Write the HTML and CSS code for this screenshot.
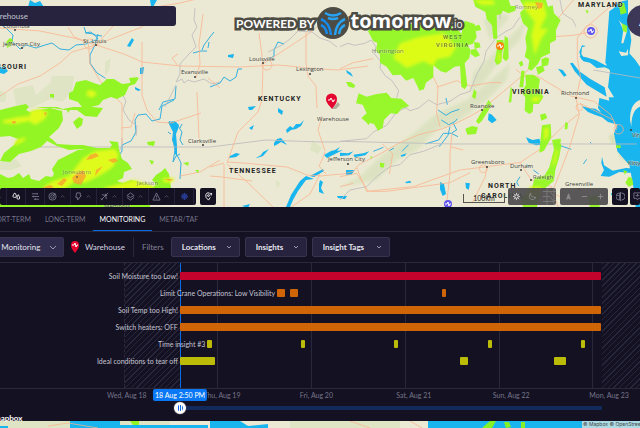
FILE: index.html
```html
<!DOCTYPE html>
<html lang="en">
<head>
    <meta charset="utf-8">
    <title>Monitoring - Warehouse</title>
    <link rel="stylesheet" href="styles.css">
</head>
<body>
<div class="app">
    <svg class="map" viewBox="0 0 640 428" preserveAspectRatio="xMidYMid slice" role="img" aria-label="Weather map">
        <defs>
            <filter id="soft"><feGaussianBlur stdDeviation="1.5"/></filter>
            <filter id="soft-east"><feGaussianBlur stdDeviation="5"/></filter>
            <filter id="edge"><feGaussianBlur stdDeviation="0.6"/></filter>
        </defs>
        <rect width="640" height="428" fill="#ebe9d3"/>

        <!-- forests -->
        <g fill="#dae4bf" opacity="0.7" filter="url(#edge)">
            <path d="M13 89l20-4 3 10 14-12 2-7 22 0-2 16-10 10-12-3-10 5-8 4-16-3z"/>
            <path d="M105 62l6-4-2 12-4 6zM0 90l7 4-2 8-5 0zM0 162l16-3 6 7-10 4-12 0z"/>
            <path d="M312 140l10 8-4 6-8-4zM608 136l8-4 4 8-8 4zM275 180l6 3-4 5z"/>
            <path d="M0 421h170v7H0zM290 421h110v7H290z"/>
        </g>

        <!-- west and centre water -->
        <g class="water">
            <path d="M30 0l5 3 5-2 4 6-5 2-5-3-6 1zM150 0h7l-4 7-2-1zM127 46l5-8 2 2-4 7zM140 68l4-1-1 7-3 0zM135 87l6 3-3 1-3-2zM0 68l4-2 4 5-4 3-4-1z"/>
            <path d="M228 55l6-1-1 4-5-1zM248 107l8-1-4 4-3 0zM278 108l5 3-1 4-4-3zM249 128l5-3-2 5zM286 130l4-4 3 2 3-4 4 0 4-4-3 6-5 3-5 1-4 3zM274 143l3-4 4-1 6 7-6-3-3 2-4 2zM256 158l5-3 2-3 6-3-6 7-6 2zM230 156l6-3 4 1-4 3-7 1zM324 155l7-4 4-1 5-3-3 4 6-1-8 4-8 4zM346 70l5 3 2 4-6-4zM242 206l8-2-2 4z"/>
            <path d="M286 207l5-12 9-14 6-5 8 3-8 1-8 11-5 9-3 7zM320 180l3 2-2 6 3 6-5-2 0-8zM310 176l13-7 1 2-10 6zM337 196l10 0-2 3-7-1z"/>
            <path d="M168 122l7-1 4 4-1 4-2 5 1 12 0 10-2-2-1-9-2-5 1-8-3-6z"/>
            <path d="M70 421h50v7H70zM120 425h88v3h-88zM0 426h8v2H0zM210 421h30l8 5 20-2v4h-58zM428 421h212v7H428z"/>
        </g>
        <g class="river">
            <path d="M175 130l-2 10 2 10-2 12 3-6 4-2M178 126l4 6-2 8 3 5M177 155l4 8-1 16M172 124l-3-3M171 134l-3-2M180 128l2-4"/>
            <path d="M0 24l6 4 7 7-1 6 8 8 6-4 10 3 9-3 7-2 8 6 9 1 7-5 10-1 12-5-4-5-8-1-2-6M85 33l6-1 3 3 8 1"/>
            <path d="M98 34l-3 11-5 10 0 8 7 10 8 5M176 86l-1 13-12 3-4 8M214 32l-4 5-6 8-2 5M193 53l8-2 6 0M208 48l1-6"/>
            <path d="M174 100l-12 6-2 13-8 2-6-7-8 1-3 5 1 12-5 9-9 4 0 6-4 6"/>
            <path d="M210 87l10-4 4-6 6 4 6-4 2-8 4 0M268 60l6-4 0-6 4-8 6 2"/>
        </g>

        <!-- state borders and highways, west and centre -->
        <g class="border">
            <path d="M195 8l-1 12 3 7-5 8 4 12-8 8-8 9 0 10-4 8 6-3 2 4 4-3 6 2 10-3 8 5 8-2M176 85l-8 16-3 6M105 78l4 3 10 8 3 5 4 7-3 9 6 10 8 6-1 10M122 138l0 8-5 8-3 14-8 16"/>
            <path d="M40 147h82M122 147h88l56 -7 54 2h20"/>
            <path d="M268 52l14-7 8-6 8-8 14 1 8 6 9 3 8 6"/>
        </g>
        <g class="road">
            <path d="M0 28l40 3 34 7 22 7 28 9 18 8 38 4 60 1 38-2 42 4 18 1 30-4"/>
            <path d="M0 96l18-12 22-8 20-13 12-11 24-7 18-20M96 45l20-8 26-10 14-20 24-4 34-8M142 42v53l5 15 10 12 14 1 30-10M88 42l-14-5-6-10M88 40l2 24 12 20 20 20v40M178 66l-6-8 6-4"/>
            <path d="M197 92l2 46M196 78l4-14-1-20 4-30M208 78l12 10M121 128l10-1 4-14M180 176l20-4 20-12M263 63l-4-30M263 64l-1 36-4 12-20 20-11 31M263 64l44-29 22-18M306 32l0 30 2 14 8 10 1 22M322 116l-4 14 7 21M227 162l16 1 44 4 20 8 14 1 19-2M210 167l14-4M224 164l0 43M227 164l20 18 26 25M210 176l12 1 30 4M320 174l-10 20-20 14M325 152l-3 8-3 6 7 8"/>
            <circle cx="267" cy="65" r="5"/><circle cx="89" cy="44" r="5"/>
            <path d="M0 186l60-2M48 426l20-3 30 5M350 421l20 7M410 421l12 7"/>
        </g>

        <!-- east side is drawn at triple scale -->
        <g class="east" transform="translate(340) scale(0.333333)">
            <g fill="#d3dfb6" opacity="0.6" filter="url(#soft-east)">
                <path d="M0 560l60-30 60-60 100-70 70-60 90-40 60-50 70-60-10 50-60 60-80 60-70 30-60 60-60 30-60 60z"/>
                <path d="M400 220l60-60 60-60 40-40-20 60-60 60-50 70-40 30zM430 60l60-20 20 10-60 70z"/>
                <path d="M810 405l20 0 4 20-22 10zM840 440l36 20-10 30-30-20z"/>
            </g>
            <g class="water">
                <path d="M808 34l14-10 12-18 30-6 0 60 10 60-6 40 18 20 14 20v430h-12l-8-70-12-66-10-10-26-30-10-54 14-36-40-6-22-34 4-30 30 8-2-10 16 0-18-30 6-50-14-24z"/>
                <path d="M800 290l-60-36-36-40-14-24 8-2 20 26 32 22 44 26zM834 220l-40-18-24 2-20-16-20-4-12-16 20 4 28 8 30 16 40 4z"/>
                <path d="M738 138l-12 4-2 20 8 12 14 4-6 6-16-6-6-22 8-20zM724 318l22 6 20 2 20 14 24 14 30 6 20 20-26-6-30-8-18-14-22-8-20-8zM654 206l14 4 12 16-8 4zM446 340l10 4 14 16-14 10-12-10zM558 412l20 8 20-4 6 18-16 2-22-8zM300 546l12 6 6 30-10 6-8-20zM376 548l14 2-4 20-8-6z"/>
                <path d="M786 470l6 26 26 16 40-8 30 2v12l-20 0-30-2-30 14-26-2 10-18-8-20z"/>
                <path d="M0 458l24 2 16-6-12 12-28 2zM40 464l30-4 18-6-12 12-32 6zM18 510l26 0-10 14-16 0zM196 546l14-4 4 6-16 2zM182 466l18-6-6 8-10 2zM812 580l24 0-4 12-16-4zM0 588l18 4-4 6-14-6z"/>
            </g>
            <g class="river">
                <path d="M318 294l4 20M294 330l24 16 16-10 24-8M304 360l22 14 20-10 6-8M256 432l40-12 14-20 24 0 20 10M330 380l-6 26-26 34M340 370l10 20-14 8M640 430l30 10 24 8M570 500l-10-6M580 510l16 12M540 530l-10 16 6 12M740 478l-10 14M750 426l4 4M148 452l14-8M206 434l-20 20M100 454l30-12"/>
            </g>
            <g fill="#ebe9d3">
                <path d="M900 300q-30 10-30 60l4 20q0-50 26-60z"/>
                <path d="M836 60l14 30-6 40 6 0 12-40zM836 154l22 4 6-12 0 20-20 2z"/>
            </g>
            <g class="border">
                <path d="M0 140l24-10 20 6 30-6 20-10 14 20-6 20 20 24-2 20 16 24 20 14 20 30-6 20 10 20 30 20 26-8 30-24 24 14 40-10 30-20 30-10 20-50 22-40 6-30 30-40 30-20 20-10 20-30 40-30M480 0v56"/>
                <path d="M0 424l340 8h550M0 600l30-30 50-10 30-30 40-30 30-6 30-30 40-10 50-20M0 424l80-8 20-20 40-20 30-40 30-14M660 0l8 40 30 20 10 20M760 210l140 24"/>
            </g>
            <g class="road">
                <path d="M0 206l40-18 60-12M0 524l40-10 16-20 60-30 60-34 60-26 66-16 50-20 40-20 34-20 60-50 60-50 30-30 60-80"/>
                <path d="M300 380l-10-40 4-80-20-40M290 262l60-20 40 16 60-10 34 0M528 208l24 20 40 0 50 30 50 30 70 16 50 40 20 40M708 294l14-60-10-60 0-60 24-30 70-60 40-20M708 294l10 50-30 100-46 120M718 340l-50 40-60 60M640 110l60-4 50-10M700 0l-50 60-20 40M336 400l-6 60 0 60-10 90M330 440l40 10M440 500l-4 30-40 80M440 500l60-8 40-4 34 52 60 20 20 60M440 500l-80 10-140 50-140 14-30-70M0 530l50-10 36 56M80 574l60 0 190-26 60-30M128 432l30 30-10 60M0 560l40-10M540 488l60-40M600 560l60 30M830 390l-10-30-100-50"/>
                <circle cx="752" cy="94" r="20"/><circle cx="836" cy="388" r="14"/><circle cx="430" cy="506" r="12"/><circle cx="718" cy="322" r="10"/>
            </g>
            <g fill="#92f91c" opacity="0.92">
                <path d="M84 94l16 30 12 4-4 24 12 12 0 24 20 12 18 26 24-2 16 18 22-8 12 24 6 14 14-4 6-20 22-16 0-36 22 18 16 4 26-18 16-2 4 62 10 8 8-12-8-66 14-16 4-24-10-14 16-4 12-20-6-40-30-10-10 40-24-30H100z"/>
                <path d="M392 150l16-4 12 20-14 6-14-10zM402 126l16 2 4 14-18 4zM404 78l14-4 6 16-18 4z"/>
                <path d="M18 246l14 0 14 10-4 8-16-4zM56 280l24 10 30-8 30-4 14 16 30 2 24 22-24 8-12 16-20-2-20 20-4 24-14 8-12-20-24-6-14-12 16-14-12-26-20-4zM84 340l10 16-8 20-8-10z"/>
                <path d="M400 0h106l6 18 16 0-2 14-20 8-18-8-4 10-14 4 2 70-12 0-4-40-16-18-4-22-30-16z"/>
                <path d="M540 0h78l6 20 14-4 4 24 20 20-14 30 0 30-18 10 0 30-26 12-10 20-20 20-10-6 4-26-14-10 6-26-4-30 8-30-16-16-8-30 14-14z"/>
                <path d="M470 120l20 0 2 16-6 20-2 30-12 10-8-12 6-30zM494 108l10 6 2 60-8 10-10-10 4-30zM536 188l10-6 4 12-8 6zM544 212l10 0-4 50-12 0zM512 260l6 6-4 40-8 2zM604 178l14-6 10 4-4 20-18 4zM588 202l20-6 6 16-20 12z"/>
                <path d="M556 224l24 0 20 14-4 24 14 30-14 20-16 0-2 24-10 6-14-10 2-40-12-14 14-24zM600 344l16-4 6 14-18 8zM676 366l8 4-2 18-8 0zM606 376l26-4 2 40-22 40-14 6 4-44z"/>
                <path d="M636 420l20-4 8 20-6 34-12 40-4 32-26 22h-40l8-30 30-8 14-24 14-54zM660 414l4 10-16 10z"/>
                <path d="M402 268l8 8-4 22-10-8zM446 300l10 14-30 48-10 10-8-8 20-34zM376 386l20-8 18 4-6 20-26 2zM120 488l14 2-4 14-10-4zM828 436h14v8h-14zM866 530l10 4 4 20-14 6-10-12zM850 510l12 4-8 10zM736 30l10 2-4 10zM836 12l16-4 8 30-18 6zM846 70l16 8-2 20-12-6zM540 590l60-14-10 48h-40zM744 590l30-4 6 38h-30zM92 468l6 4-6 4z"/>
            </g>
            <g fill="#dcfc18" filter="url(#soft-east)">
                <path d="M180 130l60-20 70-10 40 40-20 30-40 8-10 20-30-14-50 20-40-30zM550 6l60 0 10 40-20 40 24 0-20 30-20 50-10-60 10-40-30-40zM580 290l26 0-16 16-18-4zM612 384l14 0-2 26-12 14zM648 450l6 0-8 40-10 10zM570 560h36l-10 30-40-4zM400 0l60 0 4 14-40 0zM474 160l8 0-2 24-6 0z"/>
            </g>
        </g>

        <!-- precipitation, west -->
        <g fill="#8cf719" opacity="0.92" filter="url(#edge)">
            <path d="M76 82l10-2 5 2 9 3 7-6 7 0 8 5 8-1 1-4 8-1-4 6-6 2-4 9-8 4-6-2-8 3-4 5-8 2-9 0-4-5-9-3 0-6 4-2z"/>
            <path d="M35 108l8-1 14 0 6 2 10-2 20 0 10 1-6 9-12-1-8-6-12 0-12-2-10 0zM50 94l4 0 0 4-4-1zM6 42l4-4 3 2-2 6-4 2zM67 110l3 0-2 3z"/>
            <path d="M0 110l16-4 10-2 3 3-3 3 4 2 8-2 12-2 12 3 1 9-4 8-10 9 4 3 4 4 16 1 10 0 14 3-2 4-14-3-12 1-12-4-6-3-4-2-6 6-10 4-12 3-9 8-10-1 4-8 10-8 4-6-8-3-12 1z"/>
            <path d="M73 122l6-5 4 2-1 6-5 4zM129 78l9-1-2 3-6 1z"/>
            <path d="M0 174l8 4 5-1 6-4 4 5 6-4 2 5 8 2 7-5 6 1 2-3-2-5 6-9 12-6 8-4 20-2 12 0 2-3-3-4 9 1 1 8 3 9 6 4 4 6-8 3-1 6-6 3 6 2 8-3 16 4 6 3 3-3-4-4 4-5 6-4 3-3 4 6 2 14-4 8-10 4-8 0-4 19H0z"/>
            <path d="M147 142l8-1-1 5-6-1zM149 160l5 1-2 4zM183 163l6-1-1 4zM195 170l4 0-1 3z"/>
            <path d="M130 421h9v4h-6zM482 428l8-7h6l-4 7zM504 422l5 0 2 5-5 1zM521 422h4v6h-4z"/>
            <path d="M0 205h150v3H0z"/>
        </g>
        <g fill="#dffb1a" filter="url(#soft)">
            <path d="M88 90l6 1 3 3-5 4-6-3zM4 120l14-3 12-1 0-5 10-2 8 3-3 7-10 6-6-4-14 3-13-1zM83 158l12-7 20-2 4 6-6 12-12 8-16 8-10-2-10 8-16 2-6-4 10-6 16-5zM104 188l30-8 20 6-4 14h-44zM163 178l12 0-4 5-8-1zM16 140l10-3-2 4-10 5z"/>
        </g>
        <g fill="#fb9d31" opacity="0.75" filter="url(#edge)">
            <path d="M90 155l6-2 3 3-7 3-6 1zM72 178l4-4 7-4 3 6-5 9-7-2zM57 184l7-6 3 2-5 6zM42 188l8-3 4 2-7 3zM108 160l7-2 3 3-5 2zM12 121l4 0-1 3-3-1zM44 112l3 1-2 3zM164 179h9l-3 2zM96 170l7-4-8 10zM535 2l8 1-1 5-4 1z"/>
        </g>

        <!-- places -->
        <g class="city">
            <text x="83" y="43">St. Louis</text><circle cx="96" cy="45" r="1"/>
            <text x="3" y="46">Jefferson City</text><circle cx="22" cy="48" r="1"/>
            <text x="3" y="28">Columbia</text><circle cx="15" cy="30" r="1"/>
            <text x="181" y="74">Evansville</text><circle cx="195" cy="77" r="1"/>
            <text x="249" y="61">Louisville</text><circle cx="263" cy="63" r="1"/>
            <text x="296" y="71">Lexington</text><circle cx="310" cy="74" r="1"/>
            <text x="372" y="53" opacity="0.6">Huntington</text>
            <text x="317" y="121">Warehouse</text>
            <text x="188" y="143">Clarksville</text><circle cx="203" cy="145" r="1"/>
            <text x="328" y="161">Jefferson City</text><circle cx="348" cy="164" r="1"/>
            <text x="63" y="174" opacity="0.5">Jonesboro</text><circle cx="77" cy="177" r="1" opacity="0.6"/>
            <text x="137" y="185" opacity="0.6">Jackson</text>
            <text x="104" y="208">Memphis</text>
            <text x="515" y="9" opacity="0.5">Romney</text>
            <text x="470" y="108">Roanoke</text><circle cx="482" cy="110" r="1"/>
            <text x="561" y="95">Richmond</text><circle cx="576" cy="98" r="1"/>
            <text x="471" y="164">Greensboro</text><circle cx="487" cy="167" r="1"/>
            <text x="510" y="168">Durham</text><circle cx="521" cy="170" r="1"/>
            <text x="533" y="179" opacity="0.8">Raleigh</text><circle cx="531" cy="180" r="1"/>
            <text x="565" y="186">Greenville</text><circle cx="579" cy="189" r="1"/>
            <text x="628" y="165">Kitty Hawk</text>
            <text x="632" y="137">Virginia Beach</text><circle cx="631" cy="130" r="1"/>
        </g>
        <g class="state">
            <text x="27" y="69" text-anchor="end">MISSOURI</text>
            <text x="258" y="101">KENTUCKY</text>
            <text x="229" y="173">TENNESSEE</text>
            <text x="578" y="7">MARYLAND</text>
            <text x="512" y="94">VIRGINIA</text>
            <text x="443" y="39" class="faded">WEST</text>
            <text x="436" y="47" class="faded">VIRGINIA</text>
            <text x="488" y="188">NORTH</text>
            <text x="481" y="198">CAROLINA</text>
        </g>

        <!-- alert pins -->
        <path d="M332 109l6-7 2 3-4 4z" fill="#8b8b7b" opacity="0.6"/>
        <path d="M332 109c-3-4-6-6-6-10a5.500 5.500 0 0 1 11 0c0 4-2 6-5 10z" fill="#e5062f"/>
        <path d="M328 100h2l1-2 2 4 1-2h1" class="pulse"/>
        <circle cx="500" cy="46" r="4" fill="#fc8210"/><path d="M497 46h2l1-2 1 4 1-2h1" class="pulse"/>
        <circle cx="591" cy="31" r="4" fill="#6256ee"/><path d="M588 31h2l1-2 1 4 1-2h1" class="pulse"/>
        <circle cx="448" cy="204" r="4" fill="#6256ee"/><path d="M445 204h2l1-2 1 4 1-2h1" class="pulse"/>
    </svg>

    <header class="top">
        <input class="search" type="text" value="Warehouse" aria-label="Search location">
        <div class="brand">
            <span class="brand-by">POWERED BY</span>
            <svg class="brand-logo" viewBox="0 0 32 32" aria-hidden="true">
                <circle cx="16" cy="16" r="16" fill="#4c4c45"/>
                <g fill="none" stroke="#28a3f4" stroke-width="2.500">
                    <path d="M8 6q8 5 16 0"/>
                    <path d="M11 11q5 2 10 0"/>
                    <path d="M4 12q9 4 10 16" stroke="#1689ec"/>
                    <path d="M4 18q5 2 6 9" stroke="#1689ec"/>
                    <path d="M28 12q-9 4-10 16"/>
                    <path d="M28 18q-5 2-6 9"/>
                </g>
            </svg>
            <span class="brand-name">tomorrow<small>.io</small></span>
        </div>
        <button class="avatar" type="button" aria-label="Account">A</button>
    </header>

    <div class="tools">
        <div class="toolbar layers">
            <button type="button" aria-label="More"><svg viewBox="0 0 10 10"><path d="M3 6l2-2 2 2"/></svg></button>
            <button type="button" class="on" aria-label="Precipitation"><svg viewBox="0 0 10 10"><path d="M3 1q-4 5 0 5t0-5zM7 3q-3 5 0 5t0-5z"/></svg></button>
            <button type="button" aria-label="Wind"><svg viewBox="0 0 10 10"><path d="M1 2h6M1 5h8M3 8h6M7 1v2M3 4v2M5 7v2"/></svg></button>
            <button type="button" class="wide" aria-label="Radar"><svg viewBox="0 0 10 10"><circle cx="5" cy="5" r="4"/><circle cx="5" cy="5" r="2"/><path d="M5 5l3-3"/></svg><svg class="up" viewBox="0 0 10 10"><path d="M3 6l2-2 2 2"/></svg></button>
            <button type="button" class="wide" aria-label="Lightning"><svg viewBox="0 0 10 10"><path d="M3 1h4v3h1L4 9V6H2z"/></svg><svg class="up" viewBox="0 0 10 10"><path d="M3 6l2-2 2 2"/></svg></button>
            <button type="button" class="wide" aria-label="Aviation"><svg viewBox="0 0 10 10"><path d="M1 9l8-8M2 3l6 1M6 2l1 6M1 7l2 2"/></svg><svg class="up" viewBox="0 0 10 10"><path d="M3 6l2-2 2 2"/></svg></button>
            <button type="button" class="wide" aria-label="Layers"><svg viewBox="0 0 10 10"><path d="M1 4l4-3 4 3-4 2zM1 6l4 3 4-3"/></svg><svg class="up" viewBox="0 0 10 10"><path d="M3 6l2-2 2 2"/></svg></button>
            <button type="button" class="wide" aria-label="Alerts"><svg viewBox="0 0 10 10"><path d="M5 1l4 8H1zM5 4v2M5 7v1"/></svg><svg class="up" viewBox="0 0 10 10"><path d="M3 6l2-2 2 2"/></svg></button>
            <button type="button" class="snow" aria-label="Winter"><svg viewBox="0 0 10 10"><path d="M5 1v8M1 5h8M2 2l6 6M8 2L2 8"/><circle cx="5" cy="5" r="3"/></svg></button>
        </div>
        <div class="toolbar">
            <button type="button" class="on" aria-label="Add location"><svg viewBox="0 0 10 10"><path d="M7 6L5 9Q1 6 2 3t4-2"/><circle cx="5" cy="4" r="1"/><path d="M8 1v3M6 2h3"/></svg></button>
        </div>
        <div class="scale">100km</div>
        <div class="toolbar grey">
            <button type="button" class="on" aria-label="Light map"><svg viewBox="0 0 10 10"><circle cx="5" cy="5" r="2"/><path d="M5 1v1M5 8v1M1 5h1M8 5h1M2 2l1 1M7 7l1 1M8 2L7 3M3 7L2 8"/></svg></button>
            <button type="button" aria-label="Dark map"><svg viewBox="0 0 10 10"><path d="M3 1q-1 5 6 5-3 4-6 2T3 1z"/></svg></button>
            <button type="button" aria-label="Satellite map"><svg class="sat" viewBox="0 0 16 16"><path d="M0 3h16M0 8h7l3 4h6M4 0v16M11 0v16M0 13h11M7 3l4 5"/></svg></button>
        </div>
        <div class="toolbar grey">
            <button type="button" aria-label="North"><svg viewBox="0 0 10 10"><path class="solid" d="M5 2l2 6-2-1-2 1z"/></svg></button>
            <button type="button" aria-label="Zoom out"><svg viewBox="0 0 10 10"><path d="M2 5h6"/></svg></button>
            <button type="button" aria-label="Zoom in"><svg viewBox="0 0 10 10"><path d="M2 5h6M5 2v6"/></svg></button>
        </div>
        <div class="toolbar">
            <button type="button" aria-label="Globe"><svg viewBox="0 0 10 10"><path d="M4 1a4 4 0 0 0 0 8zM6 1a4 4 0 0 1 0 8M5 0v10M1 4h3"/></svg></button>
        </div>
        <div class="toolbar last">
            <button type="button" aria-label="Chat"><svg viewBox="0 0 10 10"><path d="M1 1h8v6H6L5 9 4 7H1zM5 2v3M3 4h4"/></svg></button>
        </div>
    </div>

    <main class="panel">
        <nav class="tabs">
            <a href="#short">SHORT-TERM</a>
            <a href="#long">LONG-TERM</a>
            <a href="#monitoring" class="active">MONITORING</a>
            <a href="#metar">METAR/TAF</a>
        </nav>

        <div class="filters">
            <label class="picker picker-main">
                <select aria-label="Monitoring"><option>All Monitoring</option></select>
                <svg viewBox="0 0 8 8"><path d="M1 3l3 3 3-3"/></svg>
            </label>
            <svg class="pin" viewBox="0 0 10 14" aria-hidden="true"><path d="M5 13C2 9 1 8 1 5a4 4 0 0 1 8 0c0 3-1 4-4 8z" fill="#e5062f"/><path class="pulse" d="M2 5h2l1-2 1 4 1-2h1"/></svg>
            <span class="place">Warehouse</span>
            <span class="filters-title">Filters</span>
            <label class="picker">
                <select aria-label="Locations"><option>Locations</option></select>
                <svg viewBox="0 0 8 8"><path d="M2 3l2 2 2-2"/></svg>
            </label>
            <label class="picker picker-insights">
                <select aria-label="Insights"><option>Insights</option></select>
                <svg viewBox="0 0 8 8"><path d="M2 3l2 2 2-2"/></svg>
            </label>
            <label class="picker picker-tags">
                <select aria-label="Insight Tags"><option>Insight Tags</option></select>
                <svg viewBox="0 0 8 8"><path d="M2 3l2 2 2-2"/></svg>
            </label>
        </div>

        <div class="chart">
            <div class="days">
                <span class="day-none"></span>
                <span class="day-past"></span>
                <span class="day-start"></span>
                <span class="day"></span>
                <span class="day"></span>
                <span class="day"></span>
                <span class="day"></span>
                <span class="day-end"></span>
                <span class="day-after"></span>
            </div>
            <div class="rows">
                <div class="row"><span class="row-label" style="width: 28.1%">Soil Moisture too Low!</span><i class="bar red" style="width: 65.8%"></i></div>
                <div class="row"><span class="row-label" style="width: 43.3%">Limit Crane Operations: Low Visibility</span><i class="bar orange" style="width: 1.25%"></i><i class="bar orange" style="margin-left: 0.75%; width: 1.25%"></i><i class="bar orange" style="margin-left: 22.5%; width: 0.7%"></i></div>
                <div class="row"><span class="row-label" style="width: 28.1%">Soil Temp too High!</span><i class="bar orange" style="width: 65.8%"></i></div>
                <div class="row"><span class="row-label" style="width: 28.1%">Switch heaters: OFF</span><i class="bar orange" style="width: 65.8%"></i></div>
                <div class="row"><span class="row-label" style="width: 32.4%">Time insight #3</span><i class="bar lime" style="width: 0.65%"></i><i class="bar lime" style="margin-left: 13.95%; width: 0.65%"></i><i class="bar lime" style="margin-left: 13.95%; width: 0.65%"></i><i class="bar lime" style="margin-left: 13.95%; width: 0.65%"></i><i class="bar lime" style="margin-left: 13.95%; width: 0.65%"></i></div>
                <div class="row"><span class="row-label" style="width: 28.1%">Ideal conditions to tear off</span><i class="bar lime" style="width: 5.5%"></i><i class="bar lime" style="margin-left: 38.3%; width: 1.3%"></i><i class="bar lime" style="margin-left: 13.4%; width: 1.9%"></i></div>
            </div>
        </div>

        <div class="axis">
            <span>Wed, Aug 18</span>
            <span>Thu, Aug 19</span>
            <span>Fri, Aug 20</span>
            <span>Sat, Aug 21</span>
            <span>Sun, Aug 22</span>
            <span>Mon, Aug 23</span>
        </div>

        <div class="slider">
            <output class="now" for="time">18 Aug 2:50 PM</output>
            <input id="time" type="range" min="0" max="108" value="0" aria-label="Time">
        </div>
        <span class="mapbox">mapbox</span>
    </main>

    <footer class="credits">
        <a href="#mapbox">© Mapbox</a> <a href="#osm">© OpenStreetMap</a>
    </footer>
</div>
</body>
</html>
```
FILE: styles.css
```css
body {
    margin: 0;
    font-family: Lato, "Open Sans", sans-serif;
    font-size: 8px;
    color: #d8d6e4;
    background-color: #131122;
}
button, input, select {
    font-family: inherit;
    font-size: inherit;
    color: inherit;
}
svg {
    display: block;
}
.app {
    position: relative;
    display: flex;
    flex-direction: column;
    min-height: 100vh;
    overflow: hidden;
}

/* map behind everything */
.map {
    position: absolute;
    width: 100%;
    height: 100%;
}
.water {
    fill: #19b5ee;
}
.river {
    fill: none;
    stroke: #35b0df;
    stroke-width: 1;
}
.border {
    fill: none;
    stroke: #bbb9bd;
    stroke-width: 1;
    opacity: 0.8;
}
.road {
    fill: none;
    stroke: #fbb18c;
    stroke-width: 1;
    opacity: 0.75;
}
.east .river, .east .border, .east .road {
    stroke-width: 3;
}
.city {
    font-family: "Open Sans", sans-serif;
    font-size: 6px;
    fill: #3c3c3a;
}
.state {
    font-family: Roboto, sans-serif;
    font-size: 7px;
    font-weight: bold;
    letter-spacing: 1px;
    fill: #222;
}
.state .faded {
    font-size: 6px;
    opacity: 0.5;
}
.city text, .state text {
    paint-order: stroke;
    stroke: rgba(240, 238, 220, 0.5);
    stroke-width: 1px;
}
.pulse {
    fill: none;
    stroke: #fff;
    stroke-width: 1;
}

/* header */
.top {
    position: relative;
    display: flex;
    align-items: flex-start;
    padding-top: 5px;
}
.search {
    box-sizing: border-box;
    width: 188px;
    height: 20px;
    margin: 1px 0 0 -12px;
    padding: 0;
    border: none;
    border-radius: 3px;
    background-color: #27233f;
    color: #c6c4d2;
}
.brand {
    display: flex;
    align-items: center;
    margin-left: 60px;
    color: #fff;
}
.brand-by, .brand-name {
    -webkit-text-stroke: 5px #4c4c45;
    paint-order: stroke;
    stroke-linejoin: round;
}
.brand-by {
    padding-top: 2px;
    font-size: 12px;
    font-weight: bold;
}
.brand-logo {
    width: 32px;
    height: 32px;
    margin: 0 2px;
}
.brand-name {
    font-family: "Open Sans", sans-serif;
    font-size: 20px;
    line-height: 32px;
    font-weight: bold;
}
.brand-name small {
    font-size: 10px;
    font-weight: normal;
}
.avatar {
    width: 32px;
    height: 32px;
    margin: 0 -19px 0 auto;
    border: none;
    border-radius: 50%;
    background-color: #3d3858;
    color: #fff;
    font-size: 12px;
}

/* map toolbars */
.tools {
    position: relative;
    display: flex;
    align-items: flex-end;
    gap: 4px;
    margin-top: auto;
    padding-bottom: 2px;
}
.toolbar {
    display: flex;
    flex: none;
    border-radius: 2px;
    background-color: #131122;
    overflow: hidden;
}
.toolbar button {
    display: flex;
    justify-content: space-around;
    align-items: center;
    width: 16px;
    height: 17px;
    padding: 0 3px;
    border: none;
    background: none;
    color: #77758a;
}
.toolbar svg {
    width: 9px;
    height: 9px;
    flex: none;
    fill: none;
    stroke: currentColor;
    stroke-width: 1;
}
.toolbar .up {
    opacity: 0.6;
}
.toolbar .sat {
    width: 16px;
    height: 17px;
    opacity: 0.6;
}
.toolbar .solid {
    fill: currentColor;
}
.toolbar .on {
    color: #fff;
}
.toolbar .snow {
    color: #2b3f9c;
}
.layers {
    width: 196px;
}
.layers button {
    width: 19px;
    border-right: 1px solid #25223a;
}
.layers button:first-child {
    width: 7px;
    justify-content: flex-end;
}
.layers button.wide {
    width: 26px;
}
.grey {
    background-color: rgba(76, 74, 77, 0.92);
}
.grey button {
    color: #8d8c8d;
}
.scale {
    box-sizing: border-box;
    width: 42px;
    height: 9px;
    margin: 0 -1px 2px auto;
    border: 1px solid #55554e;
    border-top: none;
    color: #222;
    font-size: 7px;
    line-height: 8px;
    text-align: center;
}
.last {
    width: 10px;
    margin-left: -2px;
}

/* bottom panel */
.panel {
    position: relative;
    margin-bottom: 7px;
    background-color: #131122;
}
.tabs {
    display: flex;
    height: 24px;
    margin-left: -20px;
    border-bottom: 1px solid #2a283b;
}
.tabs a {
    padding: 0 7px;
    border-bottom: 1px solid transparent;
    color: #77758a;
    font-size: 7px;
    line-height: 25px;
    text-decoration: none;
}
.tabs a.active {
    border-color: #0a6be6;
    color: #fff;
}
.filters {
    display: flex;
    align-items: center;
    gap: 5px;
    height: 30px;
    border-bottom: 1px solid #2a283b;
}
.picker {
    position: relative;
    width: 69px;
    height: 20px;
}
.picker select {
    box-sizing: border-box;
    width: 100%;
    height: 100%;
    padding: 0 10px;
    border: 1px solid #38344f;
    border-radius: 2px;
    background-color: #27233f;
    color: #e4e3ec;
    font-weight: bold;
    appearance: none;
}
.picker svg {
    position: absolute;
    top: 6px;
    right: 7px;
    width: 8px;
    height: 8px;
    fill: none;
    stroke: #9b99ac;
    pointer-events: none;
}
.picker-main {
    width: 80px;
    margin-left: -16px;
}
.picker-main select {
    padding: 0 5px;
    background-color: #302c4d;
    font-weight: normal;
}
.picker-insights {
    width: 62px;
}
.picker-tags {
    width: 78px;
}
.pin {
    width: 10px;
    height: 14px;
    margin-left: 1px;
}
.place {
    padding-right: 8px;
    border-right: 1px solid #2a283b;
    line-height: 20px;
}
.filters-title {
    margin: 0 2px 0 3px;
    color: #85839a;
}

/* timeline */
.chart {
    position: relative;
    height: 125px;
    border-bottom: 1px solid #2a283b;
}
.days {
    position: absolute;
    inset: 0;
    display: grid;
    grid-template-columns: 19.45% 8.65% 5.85% 14.65% 14.65% 14.65% 14.65% 1.45% 1fr;
}
.days span {
    border-left: 1px solid #2a283b;
}
.days .day-none {
    border: none;
}
.days .day-past, .days .day-after {
    border-left-style: dashed;
    background: repeating-linear-gradient(135deg, #28263a 0 1px, transparent 1px 4px);
}
.days .day-after {
    border: none;
}
.days .day-start {
    border-color: #0a6be6;
}
.rows {
    position: relative;
    padding-top: 4px;
}
.row {
    display: flex;
    align-items: center;
    height: 17px;
}
.row-label {
    box-sizing: border-box;
    flex: none;
    padding-right: 2px;
    color: #c6c4d2;
    font-size: 7px;
    text-align: right;
    white-space: nowrap;
}
.bar {
    flex: none;
    height: 8px;
    border-radius: 1px;
}
.red {
    background-color: #c4032d;
}
.orange {
    background-color: #d06508;
}
.lime {
    background-color: #bcbb08;
}
.axis {
    display: grid;
    grid-template-columns: repeat(6, 18.1%);
    padding-left: 16.7%;
    color: #77758a;
    font-size: 7px;
    line-height: 12px;
    white-space: nowrap;
}
.slider {
    position: relative;
    height: 20px;
    margin: 0 5% 0 27.2%;
}
.slider input {
    display: block;
    width: 100%;
    height: 14px;
    margin: 0;
    background: none;
    appearance: none;
}
.slider input::-webkit-slider-runnable-track {
    height: 4px;
    border-radius: 2px;
    background: linear-gradient(#112a5b, #112a5b) center / calc(100% - 12px) 4px no-repeat;
}
.slider input::-webkit-slider-thumb {
    width: 12px;
    height: 12px;
    margin-top: -4px;
    border: 3px solid #fff;
    border-radius: 50%;
    background: repeating-linear-gradient(90deg, #fff 0 1px, #0a6be6 1px 2px);
    box-shadow: 0 0 1px #fff;
    appearance: none;
}
.now {
    position: absolute;
    top: -12px;
    left: 6px;
    padding: 0 2px;
    border-radius: 2px;
    background-color: #0a78f5;
    color: #fff;
    font-size: 7px;
    line-height: 12px;
    white-space: nowrap;
    transform: translateX(-50%);
}
.mapbox {
    position: absolute;
    bottom: -2px;
    left: -6px;
    color: #fff;
    font-weight: bold;
}
.credits {
    position: absolute;
    right: 0;
    bottom: 0;
    width: 57px;
    height: 7px;
    padding-left: 1px;
    overflow: hidden;
    background-color: rgba(235, 235, 225, 0.7);
    font-family: Inter, sans-serif;
    font-size: 5px;
    line-height: 7px;
    white-space: nowrap;
}
.credits a {
    color: #444;
    text-decoration: none;
}
```
